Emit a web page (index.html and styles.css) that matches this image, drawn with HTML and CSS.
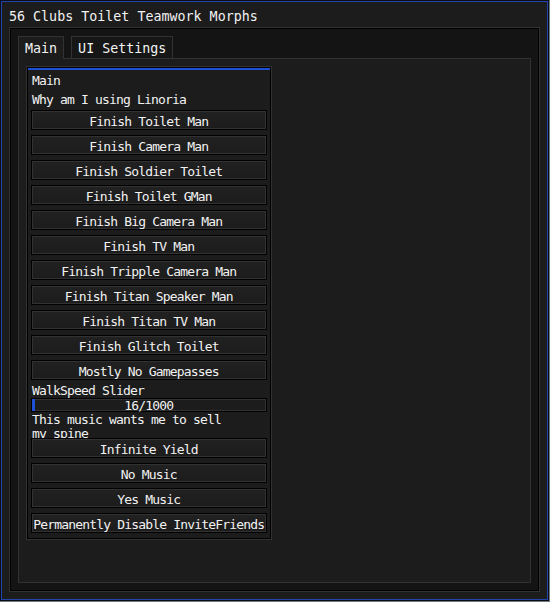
FILE: index.html
```html
<!DOCTYPE html>
<html>
<head>
<meta charset="utf-8">
<link rel="stylesheet" href="styles.css">
</head>
<body>
<div class="window">
  <div class="title">56 Clubs Toilet Teamwork Morphs</div>
  <div class="container">
    <div class="tabs">
      <div class="tab active">Main</div>
      <div class="tab">UI Settings</div>
    </div>
    <div class="content">
      <div class="groupbox">
        <div class="accent"></div>
        <div class="gb-title">Main</div>
        <div class="items">
          <div class="label">Why am I using Linoria</div>
          <div class="btn first">Finish Toilet Man</div>
          <div class="btn">Finish Camera Man</div>
          <div class="btn">Finish Soldier Toilet</div>
          <div class="btn">Finish Toilet GMan</div>
          <div class="btn">Finish Big Camera Man</div>
          <div class="btn">Finish TV Man</div>
          <div class="btn">Finish Tripple Camera Man</div>
          <div class="btn">Finish Titan Speaker Man</div>
          <div class="btn">Finish Titan TV Man</div>
          <div class="btn">Finish Glitch Toilet</div>
          <div class="btn">Mostly No Gamepasses</div>
          <div class="label slider-label">WalkSpeed Slider</div>
          <div class="slider">
            <div class="fill" style="width:1.2%"></div>
            <span class="slider-text">16/1000</span>
          </div>
          <div class="music">This music wants me to sell my spine</div>
          <div class="btn tight">Infinite Yield</div>
          <div class="btn">No Music</div>
          <div class="btn">Yes Music</div>
          <div class="btn">Permanently Disable InviteFriends</div>
        </div>
      </div>
      <div class="column"></div>
    </div>
  </div>
</div>
</body>
</html>
```
FILE: styles.css
```css
* { box-sizing: border-box; }
html, body { margin: 0; padding: 0; }
body {
  width: 550px;
  height: 602px;
  overflow: hidden;
  background: #6f7a7c;
  font-family: "DejaVu Sans Mono", "Liberation Mono", monospace;
  color: #f2f2f2;
}
.window {
  width: 549px;
  height: 601px;
  border: 1px solid #0a0c16;
  box-shadow: inset 0 0 0 1px #2344aa;
  background: #1c1c1c;
  padding: 1px 8px 8px;
  display: flex;
  flex-direction: column;
}
.title {
  height: 25px;
  padding-top: 5px;
  line-height: 20px;
  font-size: 13.33px;
  white-space: nowrap;
}
.container {
  flex: 1;
  background: #141414;
  border: 1px solid #323232;
  box-shadow: inset 0 0 0 1px #000;
  padding: 8px;
  display: flex;
  flex-direction: column;
}
.tabs {
  display: flex;
  gap: 7px;
  height: 22px;
  flex: none;
}
.tab {
  height: 22px;
  padding: 0 6px;
  border: 1px solid #323232;
  border-bottom: none;
  background: #161616;
  line-height: 24px;
  font-size: 13.33px;
  white-space: nowrap;
}
.tab.active {
  height: 23px;
  background: #1c1c1c;
  position: relative;
  z-index: 1;
}
.content {
  flex: 1;
  background: #1c1c1c;
  border: 1px solid #323232;
  padding: 7px;
  display: grid;
  grid-template-columns: 1fr 1fr;
  gap: 6px;
  align-items: start;
}
.groupbox {
  border: 1px solid #323232;
  box-shadow: inset 0 0 0 1px #000;
  padding: 1px 1px 2px;
  background: #1c1c1c;
  font-size: 13px;
  letter-spacing: -0.83px;
}
.accent {
  height: 2px;
  background: #1e4fd4;
}
.gb-title {
  height: 18px;
  line-height: 22px;
  padding-left: 4px;
}
.items {
  padding: 0 3px 4px;
  display: flex;
  flex-direction: column;
}
.label {
  height: 18px;
  line-height: 22px;
  padding-left: 1px;
  margin-top: 1px;
  white-space: nowrap;
}
.label.slider-label {
  margin-top: 0;
}
.btn {
  height: 20px;
  margin-top: 5px;
  border: 1px solid #000;
  box-shadow: inset 0 0 0 1px #323232;
  background: linear-gradient(#212121, #1c1c1c);
  text-align: center;
  line-height: 22px;
  white-space: nowrap;
}
.btn.first { margin-top: 3px; }
.btn.tight { margin-top: 0; }
.slider {
  height: 14px;
  border: 1px solid #000;
  box-shadow: inset 0 0 0 1px #323232;
  background: #1c1c1c;
  position: relative;
  text-align: center;
  line-height: 14px;
}
.fill {
  position: absolute;
  left: 0;
  top: 0;
  bottom: 0;
  background: #1e4fd4;
}
.slider-text {
  position: relative;
}
.music {
  height: 26px;
  width: 200px;
  line-height: 14px;
  padding: 1px 0 0 1px;
  overflow: hidden;
}
```
